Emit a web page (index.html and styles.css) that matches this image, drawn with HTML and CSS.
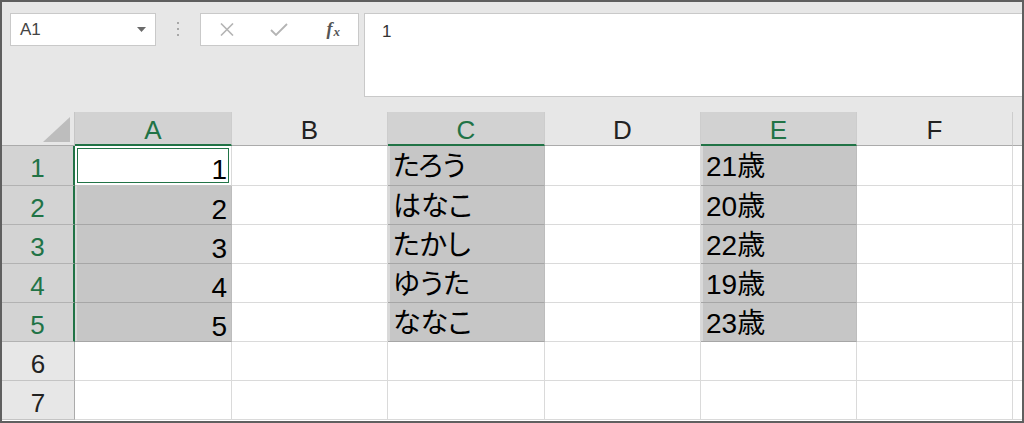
FILE: index.html
```html
<!DOCTYPE html>
<html lang="ja">
<head>
<meta charset="utf-8">
<title>Sheet</title>
<link rel="stylesheet" href="styles.css">
</head>
<body>
<div class="app">
  <div class="toolbar">
    <div class="namebox">
      <span class="ref">A1</span>
      <svg class="caret" width="9" height="5" viewBox="0 0 9 5"><polygon points="0,0 9,0 4.5,5" fill="#6a6a6a"/></svg>
    </div>
    <div class="dots"><i></i><i></i><i></i></div>
    <div class="fbtns">
      <span class="fbtn">
        <svg width="16" height="13" viewBox="0 0 16 13"><path d="M2 0.5 L14 12.5 M14 0.5 L2 12.5" stroke="#b4b4b4" stroke-width="1.6" fill="none"/></svg>
      </span>
      <span class="fbtn">
        <svg width="18" height="13" viewBox="0 0 18 13"><path d="M1 7 L6 12 L17 1" stroke="#b4b4b4" stroke-width="1.8" fill="none"/></svg>
      </span>
      <span class="fbtn fx"><i>f</i><i class="x">x</i></span>
    </div>
    <div class="formula">1</div>
  </div>
  <div class="sheet">
    <div class="corner"><svg width="27" height="25" viewBox="0 0 27 25"><polygon points="27,0 27,25 0,25" fill="#bdbdbd"/></svg></div>
    <div class="hc sel">A</div>
    <div class="hc">B</div>
    <div class="hc sel">C</div>
    <div class="hc">D</div>
    <div class="hc sel">E</div>
    <div class="hc">F</div>
    <div class="hc fill"></div>

    <div class="rh sel">1</div>
    <div class="c num active">1</div>
    <div class="c"></div>
    <div class="c s txt">たろう</div>
    <div class="c"></div>
    <div class="c s txt">21歳</div>
    <div class="c"></div>
    <div class="c fill"></div>

    <div class="rh sel">2</div>
    <div class="c num s">2</div>
    <div class="c"></div>
    <div class="c s txt">はなこ</div>
    <div class="c"></div>
    <div class="c s txt">20歳</div>
    <div class="c"></div>
    <div class="c fill"></div>

    <div class="rh sel">3</div>
    <div class="c num s">3</div>
    <div class="c"></div>
    <div class="c s txt">たかし</div>
    <div class="c"></div>
    <div class="c s txt">22歳</div>
    <div class="c"></div>
    <div class="c fill"></div>

    <div class="rh sel">4</div>
    <div class="c num s">4</div>
    <div class="c"></div>
    <div class="c s txt">ゆうた</div>
    <div class="c"></div>
    <div class="c s txt">19歳</div>
    <div class="c"></div>
    <div class="c fill"></div>

    <div class="rh sel">5</div>
    <div class="c num s">5</div>
    <div class="c"></div>
    <div class="c s txt">ななこ</div>
    <div class="c"></div>
    <div class="c s txt">23歳</div>
    <div class="c"></div>
    <div class="c fill"></div>

    <div class="rh">6</div>
    <div class="c"></div>
    <div class="c"></div>
    <div class="c"></div>
    <div class="c"></div>
    <div class="c"></div>
    <div class="c"></div>
    <div class="c fill"></div>

    <div class="rh">7</div>
    <div class="c"></div>
    <div class="c"></div>
    <div class="c"></div>
    <div class="c"></div>
    <div class="c"></div>
    <div class="c"></div>
    <div class="c fill"></div>
  </div>
</div>
</body>
</html>
```

FILE: styles.css
```css
* { box-sizing: border-box; }

html, body {
  margin: 0;
  padding: 0;
  background: #e7e7e7;
}

.app {
  width: 1024px;
  height: 423px;
  border: 2px solid #5f5f5f;
  background: #e7e7e7;
  display: flex;
  flex-direction: column;
  overflow: hidden;
  font-family: "Liberation Sans", "Noto Sans CJK JP", sans-serif;
}

/* ---------- toolbar ---------- */
.toolbar {
  height: 110px;
  flex: none;
  display: flex;
  align-items: flex-start;
  padding: 11px 0 0 8px;
}

.namebox {
  width: 146px;
  height: 33px;
  border: 1px solid #c9c9c9;
  background: #fff;
  display: flex;
  align-items: center;
  justify-content: space-between;
  padding: 0 9px 0 9px;
}

.namebox .ref {
  font-size: 17px;
  color: #444;
  padding-top: 1px;
}

.namebox .caret { margin-top: -1px; }

.dots {
  width: 44px;
  height: 33px;
  display: flex;
  flex-direction: column;
  align-items: center;
  padding-top: 9px;
  gap: 4px;
}

.dots i {
  display: block;
  width: 2px;
  height: 2px;
  background: #a8a8a8;
}

.fbtns {
  width: 159px;
  height: 33px;
  border: 1px solid #c9c9c9;
  background: #fff;
  display: flex;
}

.fbtn {
  width: 53px;
  display: flex;
  align-items: center;
  justify-content: center;
}

.fx {
  font-family: "Liberation Serif", serif;
  font-weight: bold;
  color: #555;
  font-size: 18px;
  padding-left: 3px;
}

.fx i { font-style: italic; }
.fx .x { font-size: 13px; margin-left: 1px; margin-top: 4px; }

.formula {
  flex: 1;
  height: 84px;
  margin-left: 5px;
  border: 1px solid #c9c9c9;
  border-right: none;
  background: #fff;
  padding: 8px 0 0 17px;
  font-size: 17px;
  line-height: 20px;
  color: #333;
}

/* ---------- sheet ---------- */
.sheet {
  flex: 1;
  display: grid;
  grid-template-columns: 73px 157px 156px 157px 156px 156px 156px 1fr;
  grid-template-rows: 34px 40px repeat(6, 39px);
  background: #fff;
}

.corner {
  background: #e7e7e7;
  border-right: 1px solid #c6c6c6;
  border-bottom: 1px solid #ababab;
  display: flex;
  justify-content: flex-end;
  align-items: flex-end;
  padding: 0 4px 3px 0;
}

.hc {
  background: #e7e7e7;
  border-right: 1px solid #cdcdcd;
  border-bottom: 1px solid #ababab;
  text-align: center;
  font-size: 26px;
  line-height: 29px;
  padding-top: 4px;
  color: #222;
}

.hc.sel {
  background: #d2d2d2;
  color: #217346;
  border-bottom: 2px solid #217346;
}

.hc.fill { border-right: none; }

.rh {
  background: #e7e7e7;
  border-right: 1px solid #ababab;
  border-bottom: 1px solid #c4c4c4;
  text-align: center;
  font-size: 26px;
  line-height: 28px;
  padding-top: 8px;
  color: #222;
}

.rh.sel {
  background: #d3d3d3;
  color: #217346;
  border-right: 2px solid #217346;
  border-bottom-color: #b2b2b2;
}

.c {
  background: #fff;
  border-right: 1px solid #dadada;
  border-bottom: 1px solid #dadada;
  font-size: 28px;
  line-height: 28px;
  color: #000;
  font-feature-settings: "palt";
  white-space: nowrap;
  overflow: hidden;
}

.c.fill { border-right: none; }

.c.s {
  background: #c6c6c6;
  border-bottom-color: #a6a6a6;
  border-right-color: #bdbdbd;
  box-shadow: inset 2px 0 0 #d9d9d9;
}

.c.num {
  text-align: right;
  padding: 10px 4px 0 0;
}

.c.txt {
  padding: 7px 0 0 5px;
}

.c.active {
  background: #fff;
  border-bottom-color: #c8c8c8;
  box-shadow: inset 0 0 0 2px #fff, inset 0 0 0 3px #217346;
}
```
